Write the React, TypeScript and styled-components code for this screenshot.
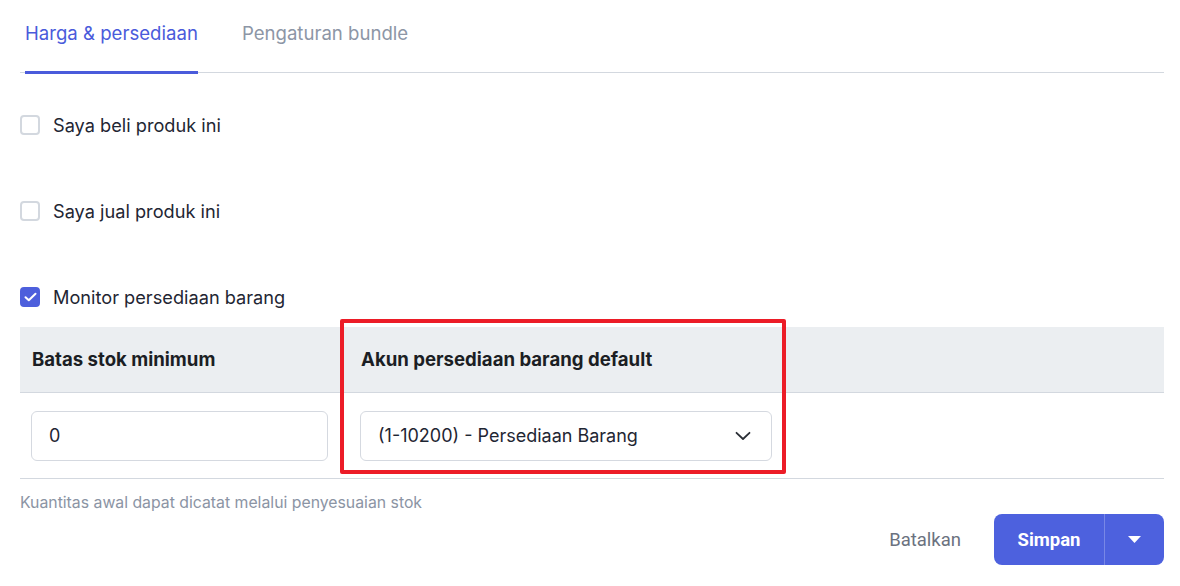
import React from 'react';
import styled, {createGlobalStyle} from 'styled-components';

const GlobalStyle = createGlobalStyle`
  html, body {
    margin: 0;
    padding: 0;
    background: #ffffff;
  }
  body {
    font-family: Inter, 'Liberation Sans', Arial, sans-serif;
    color: #1f2633;
  }
`;

const Page = styled.div`
  width: 1144px;
  padding: 0 16px 0 20px;
  display: flex;
  flex-direction: column;
`;

const TabBar = styled.div`
  display: flex;
  align-items: flex-start;
  gap: 44px;
  height: 72px;
  padding-left: 5px;
  border-bottom: 1px solid #d3d8df;
`;

const Tab = styled.div<{active?: boolean}>`
  height: 49px;
  padding-top: 22px;
  line-height: 22px;
  font-size: 18.6px;
  color: ${({active}) => (active ? '#4a5bdb' : '#8d96a6')};
  border-bottom: 3px solid ${({active}) => (active ? '#4a5bdb' : 'transparent')};
`;

const CheckList = styled.div`
  display: flex;
  flex-direction: column;
  gap: 66px;
  padding-top: 42px;
`;

const CheckRow = styled.label`
  display: flex;
  align-items: center;
  gap: 13px;
  height: 20px;
  font-size: 18.2px;
  line-height: 20px;
  color: #1f2633;
`;

const Box = styled.span<{checked?: boolean}>`
  width: 20px;
  height: 20px;
  box-sizing: border-box;
  border-radius: 4px;
  border: 2px solid ${({checked}) => (checked ? '#4d5fdc' : '#d3d8df')};
  background: ${({checked}) => (checked ? '#4d5fdc' : '#ffffff')};
  display: flex;
  align-items: center;
  justify-content: center;
  flex-shrink: 0;
`;

const Table = styled.div`
  position: relative;
  margin-top: 20px;
`;

const Row = styled.div<{head?: boolean}>`
  display: grid;
  grid-template-columns: 320px 444px 1fr;
  align-items: center;
  height: ${({head}) => (head ? '65px' : '85px')};
  background: ${({head}) => (head ? '#ebeef1' : '#ffffff')};
  border-bottom: 1px solid #d3d8df;
`;

const Cell = styled.div<{pl: number; pr: number}>`
  padding-left: ${({pl}) => pl}px;
  padding-right: ${({pr}) => pr}px;
`;

const HeadText = styled.div`
  font-size: 18.6px;
  font-weight: 700;
  color: #1b1e24;
  margin-top: -2px;
`;

const Field = styled.div`
  height: 50px;
  box-sizing: border-box;
  border: 1px solid #d5d9e0;
  border-radius: 6px;
  display: flex;
  align-items: center;
  justify-content: space-between;
  padding: 0 20px 0 17px;
  font-size: 18px;
  color: #1f2633;
`;

const Highlight = styled.div`
  position: absolute;
  left: 320px;
  top: -8px;
  width: 446px;
  height: 155px;
  box-sizing: border-box;
  border: 4px solid #ec1c27;
  border-radius: 2px;
  pointer-events: none;
`;

const Hint = styled.div`
  margin-top: 15px;
  font-size: 15.8px;
  line-height: 18px;
  color: #8b94a4;
`;

const Actions = styled.div`
  display: flex;
  justify-content: flex-end;
  align-items: center;
  margin-top: 2px;
`;

const CancelButton = styled.button`
  height: 51px;
  padding: 0 33px 0 24px;
  border: none;
  background: transparent;
  font-family: Roboto, 'Liberation Sans', sans-serif;
  font-size: 18.5px;
  color: #6b7280;
  cursor: pointer;
`;

const SplitButton = styled.div`
  display: flex;
  height: 51px;
  border-radius: 8px;
  overflow: hidden;
  background: #4d61de;
`;

const MainButton = styled.button`
  width: 111px;
  border: none;
  background: transparent;
  color: #ffffff;
  font-family: Roboto, 'Liberation Sans', sans-serif;
  font-weight: 700;
  font-size: 18.5px;
  border-right: 1px solid #7887e6;
  cursor: pointer;
`;

const CaretButton = styled.button`
  width: 59px;
  border: none;
  background: transparent;
  display: flex;
  align-items: center;
  justify-content: center;
  cursor: pointer;
`;

const Check = () => (
  <svg width="13" height="10" viewBox="0 0 13 10" fill="none">
    <path d="M1.5 5.2 4.8 8.3 11.5 1.7" stroke="#fff" strokeWidth="2" strokeLinecap="round" strokeLinejoin="round" />
  </svg>
);

const Chevron = () => (
  <svg width="16" height="10" viewBox="0 0 16 10" fill="none">
    <path d="M1.5 1.8 8 8 14.5 1.8" stroke="#2b2f36" strokeWidth="1.8" strokeLinecap="round" strokeLinejoin="round" />
  </svg>
);

const Caret = () => (
  <svg width="13" height="7" viewBox="0 0 13 7">
    <path d="M0 0h13L6.5 7z" fill="#fff" />
  </svg>
);

const items = [
  {label: 'Saya beli produk ini', checked: false},
  {label: 'Saya jual produk ini', checked: false},
  {label: 'Monitor persediaan barang', checked: true},
];

export default function App() {
  return (
    <Page>
      <GlobalStyle />
      <TabBar>
        <Tab active>Harga &amp; persediaan</Tab>
        <Tab>Pengaturan bundle</Tab>
      </TabBar>
      <CheckList>
        {items.map(it => (
          <CheckRow key={it.label}>
            <Box checked={it.checked}>{it.checked && <Check />}</Box>
            {it.label}
          </CheckRow>
        ))}
      </CheckList>
      <Table>
        <Row head>
          <Cell pl={12} pr={12}>
            <HeadText>Batas stok minimum</HeadText>
          </Cell>
          <Cell pl={21} pr={12}>
            <HeadText>Akun persediaan barang default</HeadText>
          </Cell>
          <Cell pl={12} pr={12} />
        </Row>
        <Row>
          <Cell pl={11} pr={12}>
            <Field>0</Field>
          </Cell>
          <Cell pl={20} pr={12}>
            <Field>
              (1-10200) - Persediaan Barang
              <Chevron />
            </Field>
          </Cell>
          <Cell pl={12} pr={12} />
        </Row>
        <Highlight />
      </Table>
      <Hint>Kuantitas awal dapat dicatat melalui penyesuaian stok</Hint>
      <Actions>
        <CancelButton>Batalkan</CancelButton>
        <SplitButton>
          <MainButton>Simpan</MainButton>
          <CaretButton>
            <Caret />
          </CaretButton>
        </SplitButton>
      </Actions>
    </Page>
  );
}
